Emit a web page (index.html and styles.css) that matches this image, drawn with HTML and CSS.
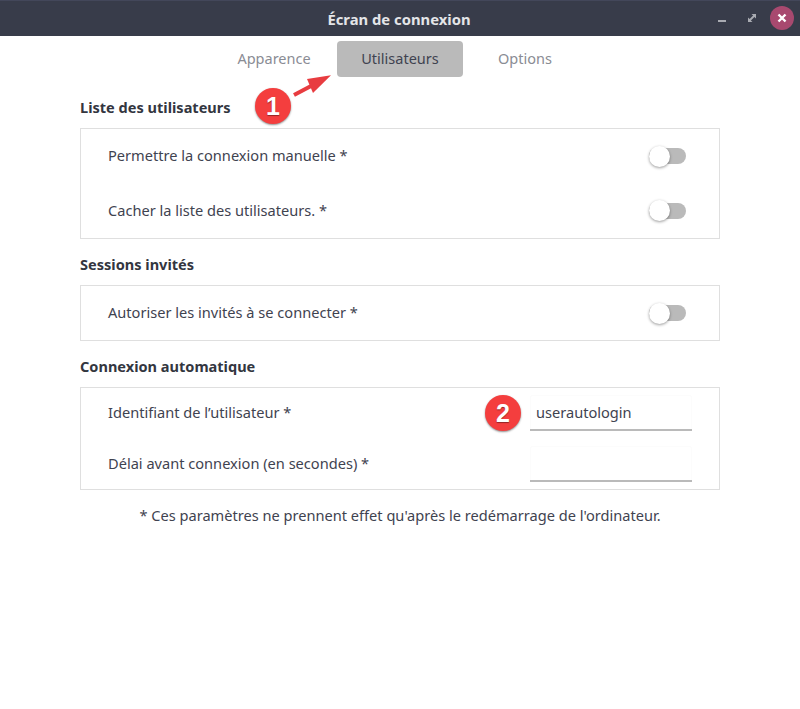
FILE: index.html
```
<!DOCTYPE html>
<html lang="fr">
<head>
<meta charset="utf-8">
<title>Écran de connexion</title>
<link rel="stylesheet" href="styles.css">
</head>
<body>
<div class="window">
  <header class="titlebar">
    <span class="title">Écran de connexion</span>
    <div class="controls">
      <svg class="ctl ctl-min" width="8" height="8" viewBox="0 0 8 8"><rect x="0" y="6" width="8" height="2" fill="#a9abb2"/></svg>
      <svg class="ctl" width="8" height="8" viewBox="0 0 8 8"><path d="M3.500 0H8V4.500L6.400 2.900L2.900 6.400L4.500 8H0V3.500L1.600 5.100L5.100 1.600z" fill="#a9abb2"/></svg>
      <div class="close"><svg width="10" height="10" viewBox="0 0 10 10"><path d="M1.500 1.500l7 7M8.500 1.500l-7 7" stroke="#fff" stroke-width="2.400"/></svg></div>
    </div>
  </header>
  <nav class="tabs">
    <span class="tab">Apparence</span>
    <span class="tab active">Utilisateurs</span>
    <span class="tab tab-last">Options</span>
  </nav>
  <main class="content">
    <section class="sec">
      <h2>Liste des utilisateurs</h2>
      <div class="card">
        <div class="row tall"><span class="label">Permettre la connexion manuelle *</span><span class="switch"></span></div>
        <div class="row tall"><span class="label">Cacher la liste des utilisateurs. *</span><span class="switch"></span></div>
      </div>
    </section>
    <section class="sec">
      <h2>Sessions invités</h2>
      <div class="card">
        <div class="row single"><span class="label">Autoriser les invités à se connecter *</span><span class="switch"></span></div>
      </div>
    </section>
    <section class="sec">
      <h2>Connexion automatique</h2>
      <div class="card">
        <div class="row entry-row"><span class="label">Identifiant de l’utilisateur *</span><span class="entry">userautologin</span></div>
        <div class="row entry-row"><span class="label">Délai avant connexion (en secondes) *</span><span class="entry"></span></div>
      </div>
    </section>
    <p class="note">* Ces paramètres ne prennent effet qu'après le redémarrage de l'ordinateur.</p>
  </main>
  <svg class="arrow" width="42" height="30" viewBox="0 0 42 30"><path d="M2 25L20 15.500" stroke="#e83c40" stroke-width="4" fill="none"/><path d="M39 5.300L15 9L21 23z" fill="#e83c40"/></svg>
  <span class="badge badge-one">1</span>
  <span class="badge badge-two">2</span>
</div>
</body>
</html>
```
FILE: styles.css
```
* { box-sizing: border-box; }
html, body { margin: 0; height: 100%; background: #fff; }
body { font-family: "Noto Sans", "Open Sans", sans-serif; font-size: 14.6px; color: #3f4350; }
.window { position: relative; width: 800px; height: 709px; overflow: hidden; background: #fff; }
.titlebar { height: 36px; background: #383c4a; display: flex; align-items: center; justify-content: center; position: relative; border-top: 1px solid #43475a; }
.title { color: #e4e5e8; font-weight: 700; font-size: 14.8px; padding-right: 2px; }
.controls { position: absolute; right: 6px; top: 5px; display: flex; align-items: center; gap: 14px; }
.ctl { display: block; }
.ctl-min { margin-right: 8px; }
.close { width: 24px; height: 24px; border-radius: 50%; background: #a8496f; display: flex; align-items: center; justify-content: center; }
.tabs { display: flex; justify-content: center; height: 36px; margin-top: 5px; }
.tab { width: 126px; display: flex; align-items: center; justify-content: center; color: #8a8c94; border-radius: 4px; padding-bottom: 2px; font-size: 14.5px; }
.tab-last { padding-right: 2px; }
.active { background: #bababa; color: #3f4350; }
.content { padding: 0 80px; margin-top: 18px; }
.sec { margin-bottom: 13px; }
h2 { margin: 0 0 8px; font-size: 14.55px; font-weight: 700; line-height: 25px; color: #33363f; }
.card { border: 1px solid #dfdfdf; padding: 0 27px; }
.row { display: flex; align-items: center; justify-content: space-between; }
.label { margin-bottom: 2px; }
.tall { height: 54.5px; }
.single { height: 54px; }
.entry-row { height: 50.5px; }
.switch { position: relative; width: 37px; height: 16px; border-radius: 8px; background: #bababa; margin-right: 6px; }
.switch::before { content: ""; position: absolute; left: 0; top: -2.5px; width: 21px; height: 21px; border-radius: 50%; background: #fff; box-shadow: 0 1px 3px rgba(0,0,0,.4); }
.entry { width: 162px; height: 36px; padding: 0 6px 1px; display: flex; align-items: center; border-bottom: 2px solid #bababa; border-radius: 3px 3px 0 0; box-shadow: inset 0 1px 0 #fcfcfc, inset 1px 0 0 #fcfcfc, inset -1px 0 0 #fcfcfc; color: #3f4350; }
.note { margin: 15px 0 0; text-align: center; }
.arrow { position: absolute; left: 292px; top: 70px; }
.badge { position: absolute; width: 36px; height: 36px; border-radius: 50%; background: #f43e3e; color: #fff; display: flex; align-items: center; justify-content: center; font-family: "Liberation Sans", sans-serif; font-weight: 700; font-size: 25px; text-shadow: 0 1px 1px rgba(0,0,0,.4); box-shadow: 0 1px 2px rgba(0,0,0,.45); }
.badge-one { left: 255px; top: 88px; }
.badge-two { left: 485px; top: 395px; }
```
